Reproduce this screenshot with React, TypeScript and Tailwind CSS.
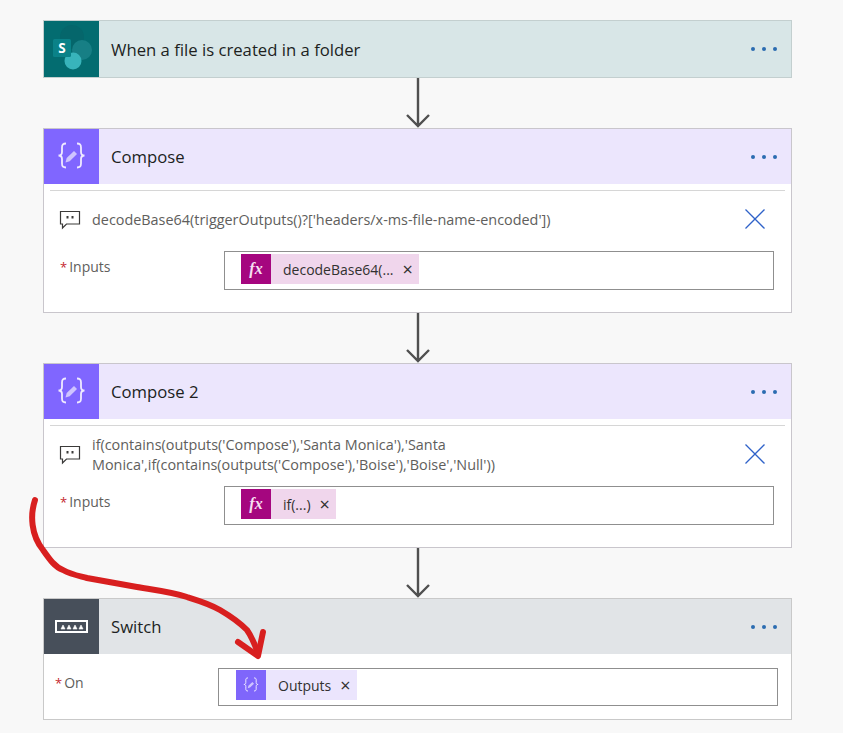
import React from "react";

function SharePointIcon() {
  return (
    <svg width="55" height="56" viewBox="0 0 55 56">
      <circle cx="28" cy="16" r="12" fill="#05666b" />
      <circle cx="38" cy="29" r="10" fill="#177f85" />
      <circle cx="29" cy="40" r="8.500" fill="#38b4bb" />
      <rect x="9" y="18" width="18" height="18" rx="1.500" fill="#0a8288" />
      <text x="18" y="32" textAnchor="middle" fill="#fff" fontSize="13.500" fontWeight="700" fontFamily="'Open Sans', sans-serif">S</text>
    </svg>
  );
}

function ComposeIcon({ size = 55 }: { size?: number }) {
  return (
    <svg width={size} height={size} viewBox="0 0 55 55" fill="none">
      <path d="M22 14.500c-3.500 0-4 1.500-4 4v4.500c0 2-1 3.500-3.500 3.500 2.500 0 3.500 1.500 3.500 3.500v4.500c0 2.500.5 4 4 4" stroke="#efeaff" strokeWidth="1.800" />
      <path d="M33 14.500c3.500 0 4 1.500 4 4v4.500c0 2 1 3.500 3.500 3.500-2.500 0-3.500 1.500-3.500 3.500v4.500c0 2.500-.5 4-4 4" stroke="#efeaff" strokeWidth="1.800" />
      <path d="M21.500 33.500l1.200-4.500 7.300-7 3 3-7.300 7.300z" fill="#cfc4ff" />
    </svg>
  );
}

function SwitchIcon() {
  return (
    <svg width="55" height="55" viewBox="0 0 55 55" fill="none">
      <rect x="12" y="22" width="31" height="11" stroke="#fff" strokeWidth="2" />
      {[17, 23, 29, 35].map((x) => (
        <path key={x} d={`M${x} 30l2-4 2 4z`} fill="#fff" stroke="#fff" strokeWidth="0.600" />
      ))}
    </svg>
  );
}

function CommentIcon() {
  return (
    <svg width="22" height="20" viewBox="0 0 22 20" fill="none" className="shrink-0">
      <path d="M1.500 1.500h19v12.500h-13l-4 4v-4h-2z" stroke="#3b3a39" strokeWidth="1.200" />
      <rect x="7.500" y="6" width="2" height="2.500" fill="#3b3a39" />
      <rect x="12.500" y="6" width="2" height="2.500" fill="#3b3a39" />
    </svg>
  );
}

function Dots() {
  return (
    <div className="ml-auto mr-[14px] flex gap-[7px]">
      <span className="w-[4px] h-[4px] rounded-full bg-[#2b6cb0]" />
      <span className="w-[4px] h-[4px] rounded-full bg-[#2b6cb0]" />
      <span className="w-[4px] h-[4px] rounded-full bg-[#2b6cb0]" />
    </div>
  );
}

function Connector() {
  return (
    <div className="h-[50px] flex justify-center">
      <svg width="26" height="50" viewBox="0 0 26 50" fill="none">
        <path d="M13 0v48M2 37l11 11 11-11" stroke="#505050" strokeWidth="2.400" />
      </svg>
    </div>
  );
}

function Header({ tile, tint, icon, title, height }: { tile: string; tint: string; icon: React.ReactNode; title: string; height: string }) {
  return (
    <div className={`flex items-center ${height} ${tint}`}>
      <div className={`w-[55px] h-full shrink-0 ${tile}`}>{icon}</div>
      <span className="ml-3 mt-[1px] text-[16.700px] text-[#201f1e]">{title}</span>
      <Dots />
    </div>
  );
}

function Token({ kind, label }: { kind: "fx" | "var"; label: string }) {
  const isFx = kind === "fx";
  return (
    <div className={`h-[30px] flex items-center pr-[6px] ${isFx ? "bg-[#f0d6ec]" : "bg-[#ebe5fd]"}`}>
      {isFx ? (
        <span className="w-[30px] h-[30px] bg-[#a5067f] text-[#f6dff1] flex items-center justify-center italic font-bold text-[16px] font-['Liberation_Serif',serif]">
          fx
        </span>
      ) : (
        <span className="w-[30px] h-[30px] bg-[#7f66fb]">
          <ComposeIcon size={30} />
        </span>
      )}
      <span className="ml-[12px] text-[14px] text-[#323130]">{label}</span>
      <span className="ml-[9px] text-[18px] leading-none text-[#323130]">×</span>
    </div>
  );
}

function ComposeCard({ title, comment, token }: { title: string; comment: React.ReactNode; token: string }) {
  return (
    <div className="h-[185px] border border-[#c9c6cc] bg-white">
      <Header height="h-[55px]" tile="bg-[#8066ff]" tint="bg-[#ece6fd]" icon={<ComposeIcon />} title={title} />
      <div className="mx-[6px] mt-[6px] border-t border-[#d6d6d6]" />
      <div className="h-[58px] flex items-center pl-[15px] pr-[25px] gap-[11px]">
        <CommentIcon />
        <p className="text-[14.400px] leading-[20px] text-[#605e5c] w-[610px]">{comment}</p>
        <svg width="22" height="22" viewBox="0 0 22 22" className="ml-auto -mt-[3px]" fill="none">
          <path d="M1.500 1.500l19 19M20.500 1.500l-19 19" stroke="#2f62c9" strokeWidth="1.300" />
        </svg>
      </div>
      <div className="mt-[2px] flex items-start pl-[16px]">
        <span className="mt-[5px] w-[164px] text-[14px] text-[#605e5c]">
          <span className="text-[13px] text-[#c4262e] mr-[2px]">*</span>Inputs
        </span>
        <div className="w-[550px] h-[39px] border border-[#8f8f8f] bg-white flex items-start pl-[16px] pt-[2px]">
          <Token kind="fx" label={token} />
        </div>
      </div>
    </div>
  );
}

export default function App() {
  return (
    <div className="relative w-[843px] h-[733px] overflow-hidden bg-[#f8f8f8] font-['Open_Sans',sans-serif]">
      <div className="w-[749px] ml-[43px] pt-[20px]">
        <div className="h-[58px] border border-[#c3cfcf] bg-[#d8e6e7]">
          <Header height="h-[56px]" tile="bg-[#036c70]" tint="bg-[#d8e6e7]" icon={<SharePointIcon />} title="When a file is created in a folder" />
        </div>
        <Connector />
        <ComposeCard
          title="Compose"
          comment="decodeBase64(triggerOutputs()?['headers/x-ms-file-name-encoded'])"
          token="decodeBase64(..."
        />
        <Connector />
        <ComposeCard
          title="Compose 2"
          comment={"if(contains(outputs('Compose'),'Santa Monica'),'Santa Monica',if(contains(outputs('Compose'),'Boise'),'Boise','Null'))"}
          token="if(...)"
        />
        <Connector />
        <div className="h-[122px] border border-[#c9c9c9] bg-white">
          <Header height="h-[55px]" tile="bg-[#474f5a]" tint="bg-[#e1e4e7]" icon={<SwitchIcon />} title="Switch" />
          <div className="flex items-start pl-[11px] pt-[14px]">
            <span className="mt-[4px] w-[163px] text-[14px] text-[#605e5c]">
              <span className="text-[13px] text-[#c4262e] mr-[2px]">*</span>On
            </span>
            <div className="w-[560px] h-[38px] border border-[#8f8f8f] bg-white flex items-start pl-[17px] pt-[1px]">
              <Token kind="var" label="Outputs" />
            </div>
          </div>
        </div>
      </div>
      {/* red annotation arrow drawn over the flow */}
      <svg className="absolute inset-0 pointer-events-none" width="843" height="733" viewBox="0 0 843 733" fill="none">
        <path d="M35 500C30 515 31 535 43 550C50 560 55 567 63 570C72 575 80 576 87 578L137 587C155 590 172 592 187 597C200 601 210 604 220 610C232 617 240 623 247 630C252 637 255 645 258 653" stroke="#d81f1f" strokeWidth="6" strokeLinecap="round" />
        <path d="M238 642L258 656L263 632" stroke="#d81f1f" strokeWidth="6" strokeLinecap="round" strokeLinejoin="round" />
      </svg>
    </div>
  );
}
